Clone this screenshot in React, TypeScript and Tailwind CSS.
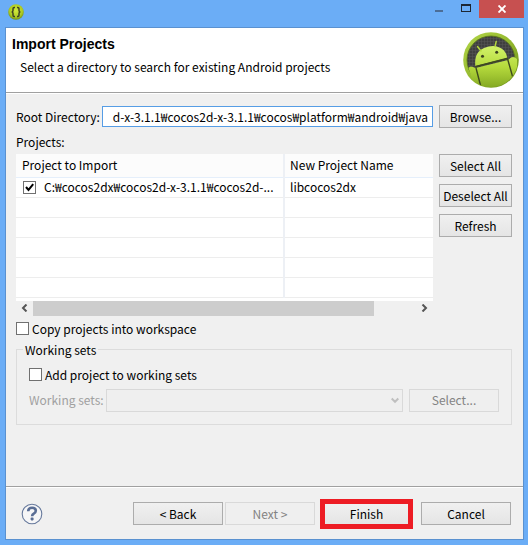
import { useState } from "react";
import type { ReactNode } from "react";
import clsx from "clsx";

const emptyRows = [1, 2, 3, 4, 5];

type ButtonProps = {
  children: ReactNode;
  className?: string;
  disabled?: boolean;
};

const Button = ({ children, className, disabled }: ButtonProps) => (
  <button
    disabled={disabled}
    className={clsx(
      "flex h-[23px] shrink-0 items-center justify-center border leading-4 whitespace-nowrap",
      disabled
        ? "border-[#d9d9d9] bg-[#efefef] text-[#838383]"
        : "border-[#acacac] bg-linear-to-b from-[#f0f0f0] to-[#e5e5e5] text-black",
      className
    )}
  >
    {children}
  </button>
);

type CheckboxProps = {
  id: string;
  label?: string;
  defaultChecked?: boolean;
};

const Checkbox = ({ id, label, defaultChecked = false }: CheckboxProps) => {
  const [checked, setChecked] = useState(defaultChecked);

  return (
    <span className="relative block size-[13px] shrink-0">
      <input
        id={id}
        type="checkbox"
        aria-label={label}
        checked={checked}
        onChange={() => setChecked(!checked)}
        className="block size-[13px] appearance-none border border-[#707070] bg-white"
      />
      {checked && (
        <svg
          viewBox="0 0 13 13"
          className="pointer-events-none absolute inset-0 size-[13px]"
        >
          <path d="M3 6 L5.5 9 L10.2 3.2" fill="none" stroke="#000" strokeWidth="2" />
        </svg>
      )}
    </span>
  );
};

const BracesIcon = () => (
  <svg viewBox="0 0 16 16" className="size-4">
    <defs>
      <radialGradient id="braces" cx="0.5" cy="0.4" r="0.6">
        <stop offset="0" stopColor="#d2ea3c" />
        <stop offset="0.7" stopColor="#abc922" />
        <stop offset="1" stopColor="#6f8c16" />
      </radialGradient>
    </defs>
    <circle cx="8" cy="8" r="7.8" fill="url(#braces)" />
    <path
      d="M7 3.5H6.2Q5 3.5 5 4.8V6.6Q5 8 3.6 8Q5 8 5 9.4V11.2Q5 12.5 6.2 12.5H7M9 3.5H9.8Q11 3.5 11 4.8V6.6Q11 8 12.4 8Q11 8 11 9.4V11.2Q11 12.5 9.8 12.5H9"
      fill="none"
      stroke="#3c4226"
      strokeWidth="1.5"
    />
  </svg>
);

const AndroidLogo = () => (
  <svg viewBox="0 0 56 56" className="size-14 shrink-0">
    <defs>
      <linearGradient id="ring" x1="0" y1="0" x2="1" y2="1">
        <stop offset="0" stopColor="#b4d84a" />
        <stop offset="0.5" stopColor="#94b82e" />
        <stop offset="1" stopColor="#688c18" />
      </linearGradient>
      <linearGradient id="droid" x1="0" y1="14" x2="0" y2="56" gradientUnits="userSpaceOnUse">
        <stop offset="0" stopColor="#d2f26a" />
        <stop offset="0.5" stopColor="#b5da3c" />
        <stop offset="1" stopColor="#83a822" />
      </linearGradient>
      <pattern id="mesh" width="3" height="3" patternUnits="userSpaceOnUse">
        <rect width="3" height="3" fill="#3f3f3f" />
        <path d="M0 0H3M0 0V3" stroke="#565656" strokeWidth="1" />
      </pattern>
      <clipPath id="disc">
        <circle cx="28" cy="28" r="27" />
      </clipPath>
    </defs>
    <circle cx="28" cy="28" r="27.8" fill="url(#ring)" />
    <circle cx="28" cy="28" r="24" fill="url(#mesh)" stroke="#59751b" strokeWidth="0.8" />
    <g clipPath="url(#disc)">
      <path
        d="M5.5 36Q7 33.5 10 35L12.5 36L45 28L48 25.5Q51 24 54 27V56H12Z"
        fill="url(#droid)"
      />
      <path
        d="M12.3 34Q11 20 21 16Q33 11 41 18.5Q44 22 44.3 26Z"
        fill="url(#droid)"
      />
      <path d="M18 19L14.5 14.5M32 14.5L33.2 9.5" stroke="#b5da3c" strokeWidth="1.4" strokeLinecap="round" />
      <path d="M12.3 34.8L44.8 26.2M13 36L17.7 54M44.6 27L50 46" fill="none" stroke="#3e4a1e" strokeWidth="1.4" />
      <circle cx="19.5" cy="24.2" r="1.5" fill="#3b421f" />
      <circle cx="33.7" cy="20.3" r="1.5" fill="#3b421f" />
    </g>
  </svg>
);

const HelpIcon = () => (
  <svg viewBox="0 0 22 22" className="size-[22px]">
    <circle cx="11" cy="11" r="9.8" fill="#f6f6f7" stroke="#66799c" strokeWidth="1.1" />
    <path
      d="M7.2 8.3Q7.2 4.8 11.1 4.8Q14.8 4.8 14.8 7.8Q14.8 9.5 12.8 10.6Q11.1 11.6 11.1 13.2"
      fill="none"
      stroke="#5a6e95"
      strokeWidth="2.6"
    />
    <rect x="9.6" y="14.6" width="3" height="2.8" rx="0.8" fill="#5a6e95" />
  </svg>
);

const TitleBar = () => (
  <div className="flex h-[27px] items-start justify-between pr-1 pl-2">
    <div className="pt-1">
      <BracesIcon />
    </div>
    <div className="flex h-[18px]">
      <button aria-label="Minimize" className="flex w-7 items-end justify-center pb-[6px]">
        <span className="block h-0.5 w-2 bg-[#4b6d97]" />
      </button>
      <button aria-label="Maximize" className="flex w-[26px] items-start justify-center pt-1">
        <span className="block h-2 w-2.5 border border-t-2 border-[#1d2733]" />
      </button>
      <button aria-label="Close" className="flex w-[45px] items-center justify-center bg-[#c75050]">
        <svg viewBox="0 0 8 8" className="size-2">
          <path d="M0.5 0.5L7.5 7.5M7.5 0.5L0.5 7.5" stroke="#fff" strokeWidth="1.9" />
        </svg>
      </button>
    </div>
  </div>
);

const ProjectTable = () => (
  <div className="min-w-0 flex-1">
    <div className="bg-white pb-[3px]">
      <table className="w-full table-fixed border-collapse text-left">
        <thead>
          <tr className="h-[23px] border-b border-[#e5effb] bg-[#fcfcfc]">
            <th className="w-[268px] border-r-2 border-[#edf0f5] px-1.5 py-0 font-normal">
              Project to Import
            </th>
            <th className="px-[5px] py-0 font-normal">New Project Name</th>
          </tr>
        </thead>
        <tbody>
          <tr className="h-5 border-b border-[#ededed]">
            <td className="border-r-2 border-[#edf0f5] py-0 pr-1 pl-[7px]">
              <div className="flex items-center gap-2">
                <Checkbox id="project" label="libcocos2dx" defaultChecked />
                <span className="whitespace-nowrap">
                  C:₩cocos2dx₩cocos2d-x-3.1.1₩cocos2d-...
                </span>
              </div>
            </td>
            <td className="px-[5px] py-0">libcocos2dx</td>
          </tr>
          {emptyRows.map((row) => (
            <tr key={row} className="h-5 border-b border-[#ededed]">
              <td className="border-r-2 border-[#edf0f5] p-0"></td>
              <td className="p-0"></td>
            </tr>
          ))}
        </tbody>
      </table>
    </div>
    <div className="flex h-[15px] text-[#555555]">
      <button aria-label="Scroll left" className="flex w-[17px] items-center justify-center">
        <svg viewBox="0 0 7 8" className="h-2 w-[7px]">
          <path d="M5.5 0.5L2 4L5.5 7.5" fill="none" stroke="currentColor" strokeWidth="2" />
        </svg>
      </button>
      <div className="flex-1">
        <div className="h-full w-[89%] bg-[#cdcdcd]" />
      </div>
      <button aria-label="Scroll right" className="flex w-[17px] items-center justify-center">
        <svg viewBox="0 0 7 8" className="h-2 w-[7px]">
          <path d="M1.5 0.5L5 4L1.5 7.5" fill="none" stroke="currentColor" strokeWidth="2" />
        </svg>
      </button>
    </div>
  </div>
);

const App = () => {
  return (
    <div className="flex min-h-screen flex-col bg-[#6badf6] font-['Noto_Sans_CJK_KR',sans-serif] text-[12px] leading-4 text-black">
      <TitleBar />
      <div className="mr-1 mb-[5px] ml-[5px] flex flex-1 flex-col border border-[#5a91d0] bg-[#f0f0f0]">
        <header className="flex h-[65px] items-start justify-between border-b border-[#a0a0a0] bg-white pt-1 pr-1 pl-1.5">
          <div className="pt-1">
            <h1 className="font-['Liberation_Sans',sans-serif] text-[14px] font-bold">
              Import Projects
            </h1>
            <p className="mt-[7px] pl-2">
              Select a directory to search for existing Android projects
            </p>
          </div>
          <AndroidLogo />
        </header>

        <main className="flex-1 border-t border-white pt-[11px] pr-[11px] pl-2.5">
          <div className="flex items-center">
            <label htmlFor="root" className="w-[86px] whitespace-nowrap">
              Root Directory:
            </label>
            <input
              id="root"
              type="text"
              defaultValue="d-x-3.1.1₩cocos2d-x-3.1.1₩cocos₩platform₩android₩java"
              className="h-[21px] min-w-0 flex-1 border border-[#569de5] bg-white pr-1 text-right outline-none"
            />
            <Button className="ml-1.5 w-[73px]">Browse...</Button>
          </div>
          <h2 className="mt-1.5">Projects:</h2>

          <div className="mt-1 flex gap-1.5">
            <ProjectTable />
            <div className="flex w-[73px] flex-col gap-[7px]">
              <Button>Select All</Button>
              <Button>Deselect All</Button>
              <Button>Refresh</Button>
            </div>
          </div>

          <div className="mt-[5px] flex items-center gap-[3px]">
            <Checkbox id="copy" />
            <label htmlFor="copy">Copy projects into workspace</label>
          </div>

          <fieldset className="mt-[5px] border border-[#dcdcdc] px-3 pb-3">
            <legend className="-ml-1.5 px-0.5">Working sets</legend>
            <div className="mt-[9px] flex items-center gap-[3px]">
              <Checkbox id="add" />
              <label htmlFor="add">Add project to working sets</label>
            </div>
            <div className="mt-1.5 flex items-center">
              <label htmlFor="sets" className="w-[77px] whitespace-nowrap text-[#a0a0a0]">
                Working sets:
              </label>
              <div className="relative min-w-0 flex-1">
                <select
                  id="sets"
                  disabled
                  className="block h-[23px] w-full appearance-none border border-[#d9d9d9] bg-[#efefef]"
                ></select>
                <svg viewBox="0 0 8 7" className="absolute top-2 right-1 h-[7px] w-2">
                  <path d="M0.7 1.5L4 4.8L7.3 1.5" fill="none" stroke="#bfbfbf" strokeWidth="2" />
                </svg>
              </div>
              <Button disabled className="ml-1.5 w-[90px]">
                Select...
              </Button>
            </div>
          </fieldset>
        </main>

        <footer className="border-t border-[#a0a0a0]">
          <div className="flex h-[52px] items-center border-t border-white pr-3 pl-[15px]">
            <button aria-label="Help">
              <HelpIcon />
            </button>
            <div className="ml-auto flex items-center">
              <Button className="w-[90px]">&lt; Back</Button>
              <Button disabled className="ml-0.5 w-[90px]">
                Next &gt;
              </Button>
              <button className="mr-2 ml-[5px] h-[30px] w-[93px] border-5 border-[#ed1c24] bg-linear-to-b from-[#f0f0f0] to-[#e5e5e5]">
                Finish
              </button>
              <Button className="w-[90px]">Cancel</Button>
            </div>
          </div>
        </footer>
      </div>
    </div>
  );
};

export default App;
